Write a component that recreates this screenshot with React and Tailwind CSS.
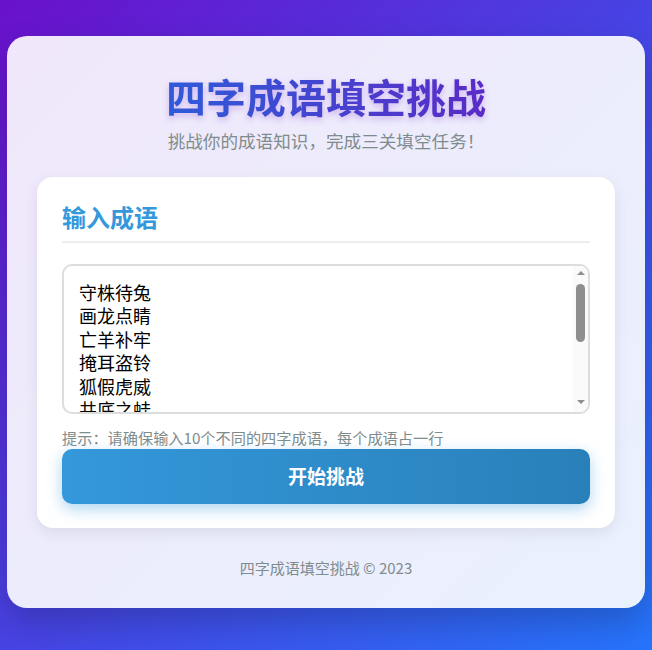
import { useState } from 'react';

const idioms = [
  '守株待兔',
  '画龙点睛',
  '亡羊补牢',
  '掩耳盗铃',
  '狐假虎威',
  '井底之蛙',
  '对牛弹琴',
  '杯弓蛇影',
  '叶公好龙',
  '刻舟求剑',
].join('\n');

export default function App() {
  const [text, setText] = useState(idioms);

  return (
    <div className="min-h-[650px] bg-[linear-gradient(135deg,#6a11cb_0%,#2575fc_100%)] px-[7px] pt-[36px] pb-[43px] font-['Noto_Sans_CJK_SC','Noto_Sans',sans-serif]">
      {/* Main card */}
      <div className="bg-white/90 rounded-[20px] shadow-[0_15px_35px_rgba(0,0,0,0.2)] px-[30px] pt-[34px] pb-[30px]">
        <h1 className="text-center text-[40px] leading-[52px] font-bold bg-[linear-gradient(90deg,#2f5bd8,#5a2bc7)] bg-clip-text text-transparent drop-shadow-[0_3px_3px_rgba(106,17,203,0.25)] w-fit mx-auto">
          四字成语填空挑战
        </h1>
        <p className="text-center text-[17.6px] leading-[26px] text-[#7f8c8d] mt-[6px]">
          挑战你的成语知识，完成三关填空任务！
        </p>

        {/* Input card */}
        <div className="mt-[23px] bg-white rounded-[16px] shadow-[0_5px_15px_rgba(0,0,0,0.08)] px-[25px] pt-[24px] pb-[24px]">
          <h2 className="text-[24px] leading-[32px] font-bold text-[#3498db] pb-[8px] border-b-2 border-[#eeeeee]">
            输入成语
          </h2>
          <div className="relative mt-[21px]">
            <textarea
              value={text}
              onChange={(e) => setText(e.target.value)}
              className="block w-full h-[150px] resize-none border-2 border-[#dddddd] rounded-[10px] p-[15px] pr-[20px] text-[18px] leading-[23.4px] text-black outline-none"
            />
            {/* scrollbar */}
            <div className="pointer-events-none absolute right-[2px] top-[2px] bottom-[2px] w-[15px] bg-[#fafafa] rounded-r-[8px] flex flex-col items-center pt-[5px] pb-[8px]">
              <div className="w-0 h-0 border-x-[4px] border-x-transparent border-b-[4px] border-b-[#8e8e8e]" />
              <div className="mt-[9px] w-[9px] h-[58px] rounded-full bg-[#8e8e8e]" />
              <div className="mt-auto w-0 h-0 border-x-[4px] border-x-transparent border-t-[4px] border-t-[#8e8e8e]" />
            </div>
          </div>
          <p className="mt-[14px] text-[15.2px] leading-[18px] text-[#7f8c8d]">
            提示：请确保输入10个不同的四字成语，每个成语占一行
          </p>
          <button className="mt-[3px] w-full h-[55px] rounded-[10px] bg-[linear-gradient(90deg,#3498db,#2980b9)] text-white text-[19px] font-bold shadow-[0_5px_15px_rgba(52,152,219,0.4)]">
            开始挑战
          </button>
        </div>

        <p className="text-center text-[15px] leading-[20px] text-[#7f8c8d] mt-[30px]">
          四字成语填空挑战 © 2023
        </p>
      </div>
    </div>
  );
}
